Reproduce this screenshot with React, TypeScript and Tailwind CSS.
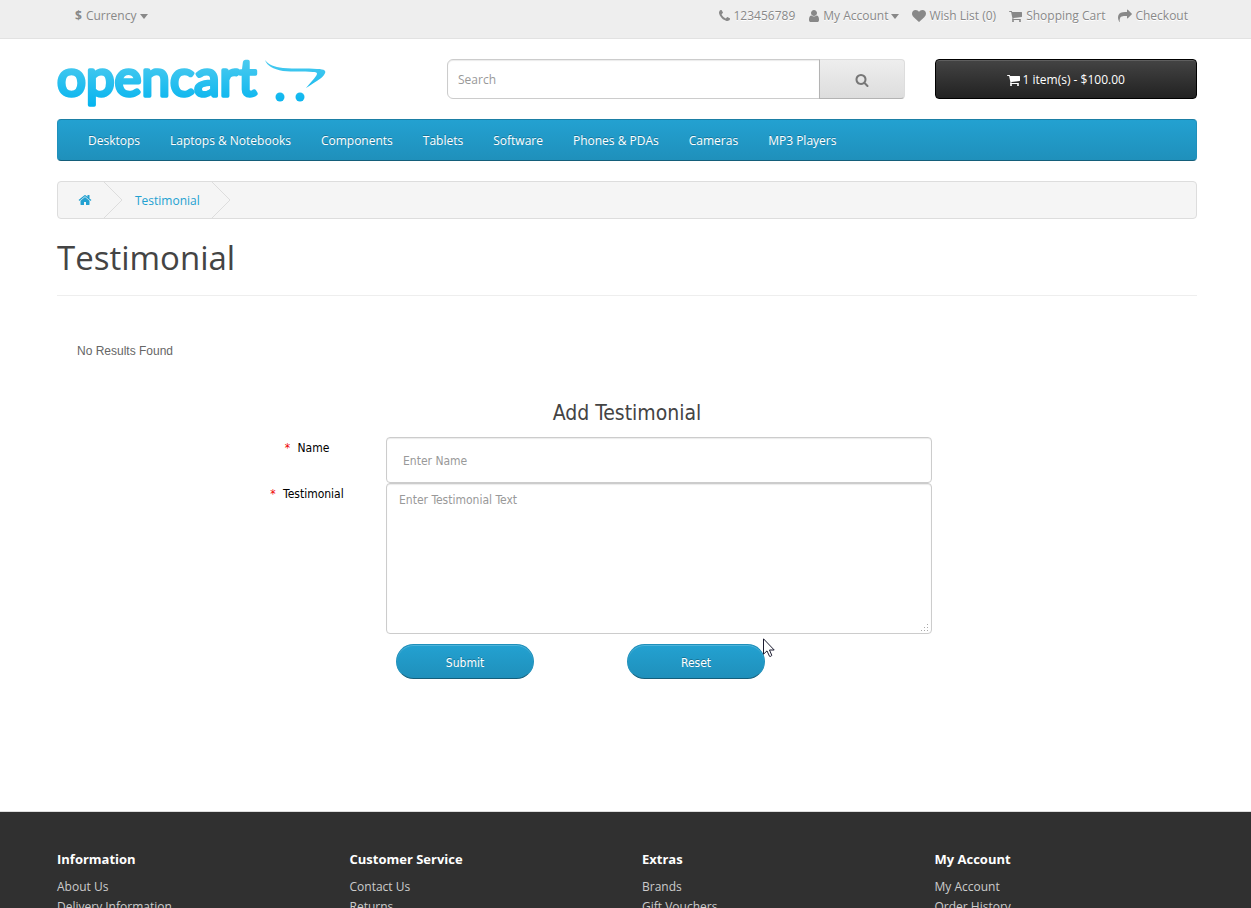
import type { ReactNode } from "react";

const icons = {
  cart: "M640 1536q0 52-38 90t-90 38-90-38-38-90 38-90 90-38 90 38 38 90zm896 0q0 52-38 90t-90 38-90-38-38-90 38-90 90-38 90 38 38 90zm128-1088v512q0 24-16.5 42.5t-40.5 21.5l-1044 122q13 60 13 70 0 16-24 64h920q26 0 45 19t19 45-19 45-45 19h-1024q-26 0-45-19t-19-45q0-11 8-31.5t16-36 21.5-40 15.5-29.5l-177-823h-204q-26 0-45-19t-19-45 19-45 45-19h256q16 0 28.5 6.5t19.5 15.5 13 24.5 8 26 5.5 29.5 4.5 26h1201q26 0 45 19t19 45z",
  phone: "M1600 1240q0 27-10 70.5t-21 68.5q-21 50-122 106-94 51-186 51-27 0-53-3.5t-57.5-12.5-47-14.5-55.5-20.5-49-18q-98-35-175-83-127-79-264-216t-216-264q-48-77-83-175-3-9-18-49t-20.5-55.5-14.5-47-12.5-57.5-3.5-53q0-92 51-186 56-101 106-122 25-11 68.5-21t70.5-10q14 0 21 3 18 6 53 76 11 19 30 54t35 63.5 31 53.5q3 4 17.5 25t21.5 35.5 7 28.5q0 20-28.5 50t-62 55-62 53-28.5 46q0 9 5 22.5t8.5 20.5 14 24 11.5 19q76 137 174 235t235 174q2 1 19 11.5t24 14 20.5 8.5 22.5 5q18 0 46-28.5t53-62 55-62 50-28.5q14 0 28.5 7t35.5 21.5 25 17.5q25 15 53.5 31t63.500 35 54 30q70 35 76 53 3 7 3 21z",
  user: "M1536 1399q0 109-62.5 187t-150.5 78h-854q-88 0-150.5-78t-62.5-187q0-85 8.5-160.5t31.5-152 58.5-131 94-89 134.5-34.5q131 128 313 128t313-128q76 0 134.5 34.5t94 89 58.5 131 31.5 152 8.5 160.5zm-256-887q0 159-112.5 271.5t-271.5 112.5-271.5-112.5-112.5-271.5 112.5-271.5 271.5-112.5 271.5 112.5 112.5 271.5z",
  heart: "M896 1664q-26 0-44-18l-624-602q-10-8-27.5-26t-55.5-65.5-68-97.5-53.5-121-23.5-138q0-220 127-344t351-124q62 0 126.5 21.5t120 58 95.5 68.5 76 68q36-36 76-68t95.5-68.5 120-58 126.5-21.5q224 0 351 124t127 344q0 221-229 450l-623 600q-18 18-44 18z",
  share: "M1792 640q0 26-19 45l-512 512q-19 19-45 19t-45-19-19-45v-256h-224q-98 0-175.5 6t-154 21.5-133 42.5-105.5 69.5-80 101-48.5 138.5-17.5 181q0 55 5 123 0 6 2.5 23.5t2.5 26.5q0 15-8.5 25t-23.5 10q-16 0-28-17-7-9-13-22t-13.5-30-10.5-24q-127-285-127-451 0-199 53-333 162-403 875-403h224v-256q0-26 19-45t45-19 45 19l512 512q19 19 19 45z",
  search: "M1216 832q0-185-131.5-316.5t-316.5-131.5-316.5 131.5-131.5 316.5 131.5 316.5 316.5 131.5 316.5-131.5 131.5-316.5zm512 832q0 52-38 90t-90 38q-54 0-90-38l-343-342q-179 124-399 124-143 0-273.5-55.5t-225-150-150-225-55.5-273.5 55.5-273.5 150-225 225-150 273.5-55.5 273.5 55.5 225 150 150 225 55.5 273.5q0 220-124 399l343 343q37 37 37 90z",
  home: "M1472 992v480q0 26-19 45t-45 19h-384v-384h-256v384h-384q-26 0-45-19t-19-45v-480q0-1 .5-3t.5-3l575-474 575 474q1 2 1 6zm223-69l-62 74q-8 9-21 11h-3q-13 0-21-7l-692-577-692 577q-12 8-24 7-13-2-21-11l-62-74q-8-10-7-23.5t11-21.5l719-599q32-26 76-26t76 26l244 204v-195q0-14 9-23t23-9h192q14 0 23 9t9 23v408l219 182q10 8 11 21.5t-7 23.5z",
};

function Icon({
  name,
  viewBox = "0 0 1792 1792",
  className = "size-3.5",
}: {
  name: keyof typeof icons;
  viewBox?: string;
  className?: string;
}) {
  return (
    <svg viewBox={viewBox} fill="currentColor" aria-hidden="true" className={`${className} shrink-0`}>
      <path d={icons[name]} />
    </svg>
  );
}

function Caret() {
  return (
    <svg viewBox="0 0 8 5" fill="currentColor" aria-hidden="true" className="h-[5px] w-2 shrink-0">
      <path d="M0 0h8L4 5z" />
    </svg>
  );
}

function Logo() {
  return (
    <svg viewBox="0 0 270 50" role="img" aria-label="opencart" className="h-[50px] w-[270px] overflow-visible">
      <defs>
        <linearGradient id="logo-blue" gradientUnits="userSpaceOnUse" x1="0" y1="0" x2="0" y2="50">
          <stop offset="0" stopColor="#4dcbef" />
          <stop offset="1" stopColor="#00b2ef" />
        </linearGradient>
      </defs>
      <text
        x="0"
        y="37"
        fill="url(#logo-blue)"
        stroke="url(#logo-blue)"
        strokeWidth="3.500"
        strokeLinejoin="round"
        className="font-['Lato'] text-[51px] font-normal"
      >
        opencart
      </text>
      <path
        fill="url(#logo-blue)"
        d="M208 1c4 5 9 7 18 8 12 1 24 0 34 1 8 0 10 2 7 6-3 4-9 7-18 13 4-5 8-9 10-12 2-3 1-4-3-4-10-1-20 0-30-1-10-2-16-5-18-11z"
      />
      <circle cx="223" cy="38" r="4.500" fill="url(#logo-blue)" />
      <circle cx="243" cy="38" r="4.500" fill="url(#logo-blue)" />
    </svg>
  );
}

function TopLink({ children }: { children: ReactNode }) {
  return (
    <a href="#" className="flex items-center gap-[3px]">
      {children}
    </a>
  );
}

const categories = [
  "Desktops",
  "Laptops & Notebooks",
  "Components",
  "Tablets",
  "Software",
  "Phones & PDAs",
  "Cameras",
  "MP3 Players",
];

const footerColumns = [
  { title: "Information", links: ["About Us", "Delivery Information"] },
  { title: "Customer Service", links: ["Contact Us", "Returns"] },
  { title: "Extras", links: ["Brands", "Gift Vouchers"] },
  { title: "My Account", links: ["My Account", "Order History"] },
];

const pageGutter = "pl-[57px] pr-[54px]";
const fieldClass =
  "block w-full rounded border border-[#ccc] bg-white shadow-[inset_0_1px_1px_rgba(0,0,0,0.08)] outline-none placeholder:text-[#999]";
const pillClass =
  "h-[35px] w-[138px] rounded-full border border-[#1f90bb] border-b-[#145e7a] bg-linear-to-b from-[#23a1d1] to-[#1f90bb] pt-0.5 text-white shadow-[inset_0_1px_0_rgba(255,255,255,0.2)] text-shadow-[0_-1px_0_rgba(0,0,0,0.25)]";

function Crumb({ children, className }: { children: ReactNode; className: string }) {
  return (
    <li className="flex items-center">
      <a href="#" className={className}>
        {children}
      </a>
      <svg viewBox="0 0 19 36" fill="none" stroke="#ddd" aria-hidden="true" className="h-9 w-[19px]">
        <path d="M0 0l18 18L0 36" />
      </svg>
    </li>
  );
}

export default function App() {
  return (
    <div className="flex min-h-screen flex-col bg-white font-['Open_Sans',sans-serif] text-[12px] leading-5 text-[#666]">
      <nav className={`${pageGutter} flex h-[39px] shrink-0 items-start justify-between border-b border-[#e2e2e2] bg-[#eee] pt-1.5 text-[#888] text-shadow-[0_1px_0_#fff]`}>
        <button type="button" className="ml-[18px] flex items-center gap-1">
          <strong>$</strong> Currency <Caret />
        </button>
        <div className="mr-[9px] flex gap-[13px]">
          <TopLink>
            <Icon name="phone" viewBox="192 0 1408 1792" className="h-3.5 w-[11px]" /> 123456789
          </TopLink>
          <TopLink>
            <Icon name="user" viewBox="256 0 1280 1792" className="h-3.5 w-3" /> My Account <Caret />
          </TopLink>
          <TopLink>
            <Icon name="heart" /> Wish List (0)
          </TopLink>
          <TopLink>
            <Icon name="cart" /> Shopping Cart
          </TopLink>
          <TopLink>
            <Icon name="share" /> Checkout
          </TopLink>
        </div>
      </nav>

      <header className={`${pageGutter} grid shrink-0 grid-cols-12 gap-x-[30px] pt-5`}>
        <a href="#" className="col-span-4 h-[60px]">
          <Logo />
        </a>
        <form className="col-span-5 flex h-10">
          <input
            type="text"
            aria-label="Search"
            placeholder="Search"
            className="min-w-0 flex-1 rounded-l-md border border-[#ccc] px-2.5 pt-0.5 shadow-[inset_0_1px_1px_rgba(0,0,0,0.08)] outline-none placeholder:text-[#999]"
          />
          <button
            type="button"
            aria-label="Search"
            className="-ml-px flex w-[86px] items-center justify-center rounded-r border border-[#ddd] border-b-[#b3b3b3] border-l-[#b3b3b3] bg-linear-to-b from-[#eee] to-[#ddd] pt-0.5 text-[#777]"
          >
            <Icon name="search" />
          </button>
        </form>
        <button
          type="button"
          className="col-span-3 flex h-10 items-center justify-center gap-0.5 rounded border border-black bg-linear-to-b from-[#444] to-[#222] pt-0.5 text-white shadow-[inset_0_1px_0_rgba(255,255,255,0.15)]"
        >
          <Icon name="cart" /> 1 item(s) - $100.00
        </button>
      </header>

      <main className={`${pageGutter} shrink-0`}>
        <nav className="flex h-[42px] items-center rounded border border-[#1f90bb] border-t-[#1b7fa5] border-b-[#145e7a] bg-linear-to-b from-[#23a1d1] to-[#1f90bb] px-[15px] pt-0.5 text-white text-shadow-[0_-1px_0_rgba(0,0,0,0.25)]">
          {categories.map((category) => (
            <a key={category} href="#" className="px-[15px]">
              {category}
            </a>
          ))}
        </nav>

        <ol className="mt-5 flex h-[38px] items-center overflow-hidden rounded border border-[#ddd] bg-[#f5f5f5] text-[#23a1d1]">
          <Crumb className="pr-3 pl-5">
            <Icon name="home" />
          </Crumb>
          <Crumb className="px-3 pt-0.5">Testimonial</Crumb>
        </ol>

        <h1 className="mt-5 border-b border-[#eee] pb-[18px] text-[33px] leading-[38px] text-[#444]">Testimonial</h1>

        <p className="mt-[45px] ml-5 font-['Liberation_Sans',sans-serif]">No Results Found</p>

        <section className="mt-9 h-[414px] font-['DejaVu_Sans_Condensed','DejaVu_Sans',sans-serif]">
          <h2 className="pb-2 text-center text-[21px] leading-8 text-[#444]">Add Testimonial</h2>
          <form className="mr-[265px] ml-[171px] grid grid-cols-[158px_1fr]">
            <label htmlFor="name" className="pt-px text-center text-black">
              <span className="mr-1 text-[#e00]">*</span> Name
            </label>
            <input id="name" type="text" placeholder="Enter Name" className={`${fieldClass} h-[46px] px-4 pt-0.5`} />
            <label htmlFor="testimonial" className="pt-px text-center text-black">
              <span className="mr-1 text-[#e00]">*</span> Testimonial
            </label>
            <div className="relative">
              <textarea
                id="testimonial"
                placeholder="Enter Testimonial Text"
                className={`${fieldClass} h-[151px] resize-none px-3 py-1.5`}
              />
              <svg viewBox="0 0 8 8" fill="#aaa" aria-hidden="true" className="absolute right-[3px] bottom-0.5 size-2">
                <path d="M6 0h1v1h-1zM3 3h1v1h-1zM6 3h1v1h-1zM0 6h1v1h-1zM3 6h1v1h-1zM6 6h1v1h-1z" />
              </svg>
            </div>
            <div className="relative col-start-2 flex gap-[93px] pt-2.5 pl-2.5">
              <button type="button" className={pillClass}>
                Submit
              </button>
              <button type="reset" className={pillClass}>
                Reset
              </button>
              <svg viewBox="0 0 12 20" aria-hidden="true" className="absolute top-1 left-[377px] h-5 w-3">
                <path
                  d="M.5.8v15.400l3.500-3.300 2.500 5.400q1.500.5 2.300-.9L6.500 12h4.700z"
                  fill="#fff"
                  stroke="#1c1c30"
                />
              </svg>
            </div>
          </form>
        </section>
      </main>

      <footer className={`${pageGutter} grid shrink-0 grid-cols-4 gap-x-[30px] border-t border-[#ddd] bg-[#303030] pt-[37px] pb-8 text-[#ccc]`}>
        {footerColumns.map((column) => (
          <section key={column.title}>
            <h3 className="mb-2 text-[13px] font-bold text-white">{column.title}</h3>
            <ul>
              {column.links.map((link) => (
                <li key={link}>
                  <a href="#">{link}</a>
                </li>
              ))}
            </ul>
          </section>
        ))}
      </footer>
    </div>
  );
}
